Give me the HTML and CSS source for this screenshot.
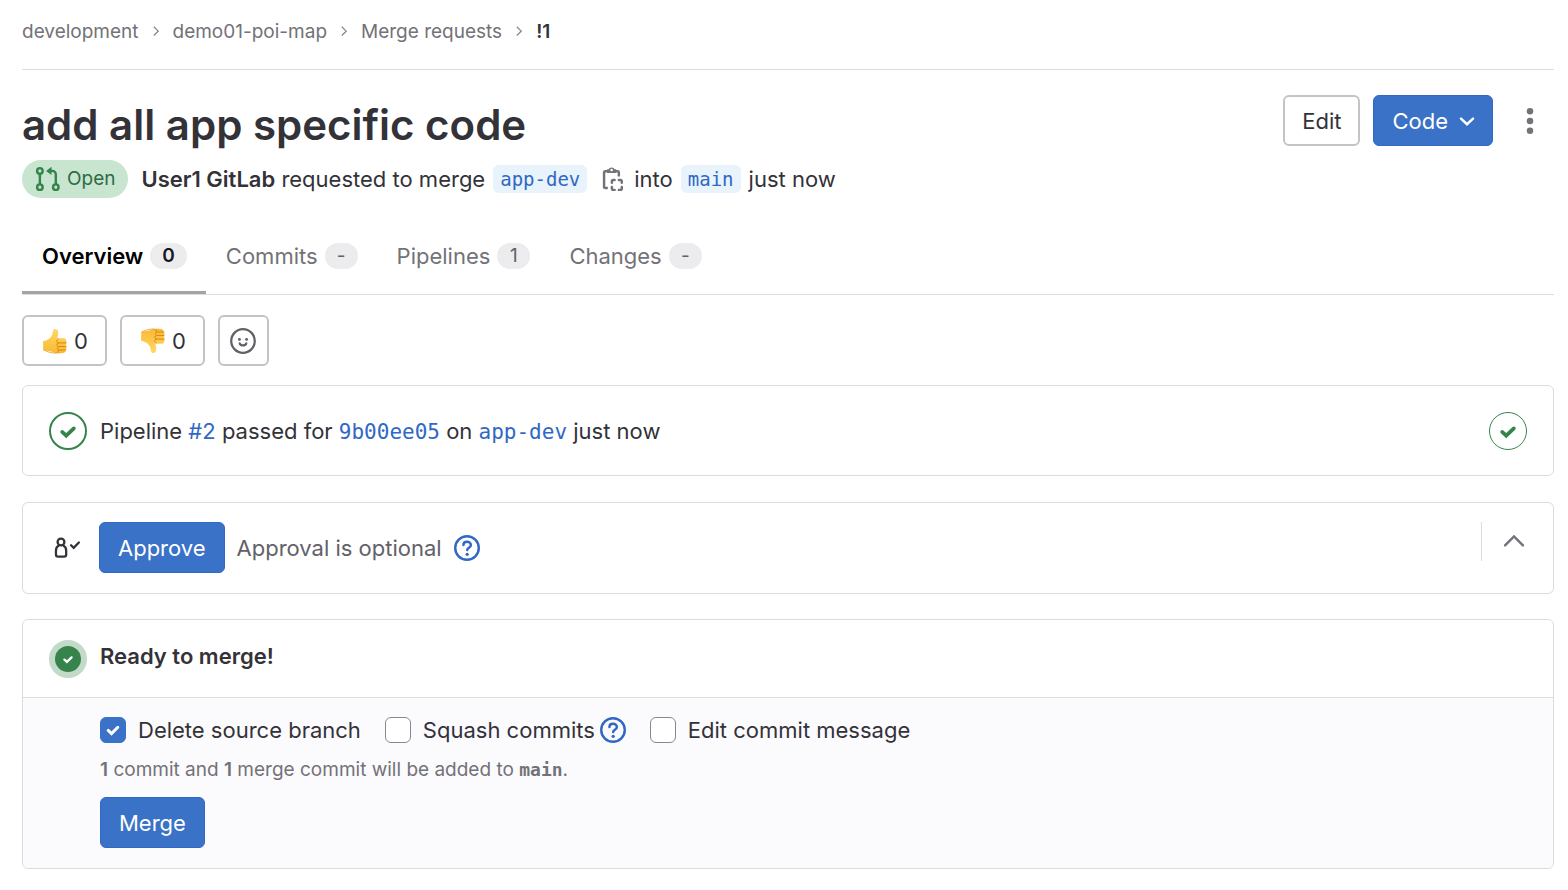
FILE: index.html
```html
<!DOCTYPE html>
<html lang="en">
<head>
<meta charset="utf-8">
<meta name="viewport" content="width=device-width, initial-scale=1">
<title>add all app specific code (!1) · Merge requests</title>
<link rel="stylesheet" href="styles.css">
</head>
<body>
<svg class="defs" aria-hidden="true">
  <defs>
    <linearGradient id="skin" x1="0" y1="0" x2="0" y2="1">
      <stop offset="0" stop-color="#ffd964"/>
      <stop offset="1" stop-color="#f9b934"/>
    </linearGradient>
    <symbol id="crumb" viewBox="0 0 16 16"><path d="M5.500 2l5 5-5 5" fill="none" stroke="currentColor" stroke-width="1.500"/></symbol>
    <symbol id="check" viewBox="0 0 16 16"><path d="M4.400 8.600l2.500 2.300 4.700-4.500" fill="none" stroke="currentColor" stroke-width="2.300" stroke-linecap="round"/></symbol>
    <symbol id="help" viewBox="0 0 16 16">
      <circle cx="8" cy="8" r="7.250" fill="none" stroke="currentColor" stroke-width="1.500"/>
      <path d="M5.800 6.200C5.800 4.900 6.700 4.200 8 4.200s2.400.8 2.400 2c0 1.700-2.300 1.600-2.300 3.100" fill="none" stroke="currentColor" stroke-width="1.500" stroke-linecap="round"/>
      <circle cx="8.100" cy="11.900" r="1" fill="currentColor"/>
    </symbol>
    <symbol id="thumb" viewBox="0 0 26 26">
      <path d="M1 13.200c3.500-.4 7.600-2.600 9.100-6.200.6-1.800.5-4.400 1.700-5.700 1.600-.9 3.600 0 4.200 2 .6 2.600-.3 5-.8 6.900h5.800c2.900 0 3.900 2.200 3.200 4l.2 7.200c-.4 2.300-2.200 3.600-4.600 3.800-5 .5-8.200-.6-11.300-2L1.300 22.300z" fill="url(#skin)"/>
      <path d="M16 11.200c-1.900 1.100-1.700 3.200.3 3.700-1.900.7-1.700 3.200.2 3.700-1.700.8-1.400 3 .3 3.400-1 .6-1.200 1.900-.4 2.800M16.200 14.900h7.900M16.500 18.600h7.400M16.700 22h6.500" fill="none" stroke="#d8860f" stroke-width="1" stroke-linecap="round"/>
      <path d="M1.500 21.900c4.500 2.200 8.500 3.500 13.900 3.100" fill="none" stroke="#e59a1c" stroke-width=".8"/>
    </symbol>
  </defs>
</svg>
<div class="page">
  <nav class="breadcrumbs" aria-label="Breadcrumb">
    <a href="#">development</a>
    <svg class="sep"><use href="#crumb"/></svg>
    <a href="#">demo01-poi-map</a>
    <svg class="sep"><use href="#crumb"/></svg>
    <a href="#">Merge requests</a>
    <svg class="sep"><use href="#crumb"/></svg>
    <a href="#" class="current">!1</a>
  </nav>

  <header class="head">
    <h1>add all app specific code</h1>
    <div class="actions">
      <button class="btn" type="button">Edit</button>
      <button class="btn primary code" type="button">Code
        <svg class="icon" viewBox="0 0 16 16"><path d="M4.300 6.500L8 10l3.700-3.500" fill="none" stroke="currentColor" stroke-width="1.500" stroke-linecap="round"/></svg>
      </button>
      <button class="kebab" type="button" aria-label="Merge request actions">
        <svg class="icon" viewBox="0 0 16 16"><g fill="currentColor"><circle cx="8" cy="2" r="2"/><circle cx="8" cy="8" r="2"/><circle cx="8" cy="14" r="2"/></g></svg>
      </button>
    </div>
  </header>

  <div class="meta">
    <span class="state">
      <svg class="icon" viewBox="0 0 16 16"><g fill="none" stroke="currentColor" stroke-width="1.500"><circle cx="3" cy="3" r="1.700"/><circle cx="3" cy="13" r="1.700"/><circle cx="12.800" cy="13" r="1.700"/><path d="M3 4.700v6.600M8.500 3h2a2.300 2.300 0 0 1 2.300 2.300v6"/></g><path d="M10.200.4v5.200L6.800 3z" fill="currentColor"/></svg>
      Open
    </span>
    <span><strong>User1 GitLab</strong> requested to merge</span>
    <a class="ref" href="#">app-dev</a>
    <button class="copy" type="button" aria-label="Copy branch name">
      <svg class="icon" viewBox="0 0 16 16">
        <g fill="none" stroke="currentColor">
          <path d="M4.500 3.200H3.300c-.5 0-.8.300-.8.800v8.700c0 .5.300.8.800.8h1.500M9.800 3.200h1c.5 0 .8.300.8.800v2.500" stroke-width="1.500"/>
          <path d="M4.800 3.900V2.500h.7a1.800 1.800 0 0 1 3.300 0h.7v1.400z" fill="currentColor" stroke-width=".9"/>
          <path d="M7.300 10.300v-.8c0-.6.300-.9.900-.9H9M11.600 8.600h.9c.6 0 .9.300.9.900v.8M13.400 12.900v.9c0 .6-.3.900-.9.900h-.9M9 14.700h-.8c-.6 0-.9-.3-.9-.9v-.9" stroke-width="1.500" stroke-linecap="round"/>
        </g>
        <circle cx="7.150" cy="2.500" r=".8" fill="#fff"/>
      </svg>
    </button>
    <span>into</span>
    <a class="ref" href="#">main</a>
    <time>just now</time>
  </div>

  <nav class="tabs" aria-label="Merge request">
    <a class="tab active" href="#">Overview <span class="count">0</span></a>
    <a class="tab" href="#">Commits <span class="count">-</span></a>
    <a class="tab" href="#">Pipelines <span class="count">1</span></a>
    <a class="tab" href="#">Changes <span class="count">-</span></a>
  </nav>

  <div class="reactions">
    <button class="btn react" type="button" aria-label="Thumbs up"><svg class="icon"><use href="#thumb"/></svg>0</button>
    <button class="btn react" type="button" aria-label="Thumbs down"><svg class="icon" viewBox="0 0 26 26"><use href="#thumb" width="26" height="26" transform="matrix(1 0 0 -1 0 26)"/></svg>0</button>
    <button class="btn smile" type="button" aria-label="Add reaction">
      <svg class="icon" viewBox="0 0 16 16"><g fill="none" stroke="currentColor" stroke-width="1.400"><circle cx="8" cy="8" r="7.250"/><path d="M6 9.500c.4 1.600 3.600 1.600 4 0" stroke-linecap="round"/></g><g fill="currentColor"><circle cx="5.800" cy="7" r=".9"/><circle cx="10.200" cy="7" r=".9"/></g></svg>
    </button>
  </div>

  <section class="card pipeline">
    <span class="ring thick"><svg class="icon"><use href="#check"/></svg></span>
    <p>Pipeline <a href="#">#2</a> passed for <a class="mono" href="#">9b00ee05</a> on <a class="mono" href="#">app-dev</a> just now</p>
    <a class="ring stage" href="#" aria-label="Stage passed"><svg class="icon"><use href="#check"/></svg></a>
  </section>

  <section class="card approval">
    <svg class="icon approver" viewBox="0 0 16 16"><g fill="none" stroke="currentColor" stroke-width="1.400"><circle cx="4.300" cy="4.300" r="2.100"/><path d="M3.100 6.500C1.800 7 1.200 8.300 1.200 9.700V12c0 .9.400 1.300 1.300 1.300h3.700c.9 0 1.300-.4 1.300-1.300V9.700c0-1.400-.6-2.700-1.900-3.200"/><path d="M10.500 6.300l1.600 1.600 3.200-3.300" stroke-linecap="round"/></g></svg>
    <button class="btn primary" type="button">Approve</button>
    <span class="optional">Approval is optional</span>
    <a class="help" href="#" aria-label="About approvals"><svg class="icon"><use href="#help"/></svg></a>
    <div class="toggle">
      <button type="button" aria-label="Collapse">
        <svg class="icon" viewBox="0 0 16 16"><path d="M2.500 10.700L8 5.200l5.500 5.500" fill="none" stroke="currentColor" stroke-width="1.500" stroke-linecap="round"/></svg>
      </button>
    </div>
  </section>

  <section class="card merge">
    <div class="ready">
      <span class="status"><svg viewBox="0 0 16 16"><use href="#check"/></svg></span>
      <h2>Ready to merge!</h2>
    </div>
    <form class="options">
      <div class="checks">
        <div class="check"><input type="checkbox" id="del" checked><label for="del">Delete source branch</label></div>
        <div class="check squash"><input type="checkbox" id="squash"><label for="squash">Squash commits</label><a class="help" href="#" aria-label="About squashing"><svg class="icon"><use href="#help"/></svg></a></div>
        <div class="check"><input type="checkbox" id="msg"><label for="msg">Edit commit message</label></div>
      </div>
      <p class="summary"><strong>1</strong> commit and <strong>1</strong> merge commit will be added to <strong class="target">main</strong>.</p>
      <button class="btn primary" type="button">Merge</button>
    </form>
  </section>
</div>
</body>
</html>
```

FILE: styles.css
```css
* { box-sizing: border-box; }

body {
  margin: 0;
  background: #fff;
  color: #333238;
  font: 22px/32px Inter, "Liberation Sans", sans-serif;
}

h1, h2, p { margin: 0; }
a { color: #2f68c5; text-decoration: none; }
button { font: inherit; cursor: pointer; }
svg { display: block; flex: none; }
strong { font-weight: 600; }

.defs { position: absolute; width: 0; height: 0; }
.icon { width: 26px; height: 26px; }
.page { padding: 0 14px 21px 22px; }

.breadcrumbs {
  display: flex;
  align-items: center;
  gap: 10px;
  height: 70px;
  padding-bottom: 6px;
  border-bottom: 1px solid #dcdcde;
  font-size: 19px;
}
.breadcrumbs a { color: #737278; }
.breadcrumbs .current { color: #333238; font-weight: 600; }
.sep { width: 14px; height: 14px; color: #89888d; }

.head {
  display: flex;
  justify-content: space-between;
  align-items: flex-start;
  padding-top: 25px;
}
h1 { padding-top: 3px; font-size: 42px; line-height: 54px; font-weight: 600; }
.actions { display: flex; gap: 13px; }

.btn {
  display: inline-flex;
  align-items: center;
  justify-content: center;
  height: 51px;
  padding: 0 17px;
  border: 2px solid #c4c4c8;
  border-radius: 6px;
  background: #fff;
  color: #333238;
}
.btn.primary { border: 1px solid #2f68c5; background: #3972c6; color: #fff; padding: 0 18px; }
.btn.code { gap: 6px; padding-right: 12px; }
.kebab {
  display: grid;
  place-items: center;
  width: 48px;
  height: 51px;
  padding: 0;
  border: 0;
  background: none;
  color: #737278;
}

.meta { display: flex; flex-wrap: wrap; align-items: center; gap: 8px; padding-top: 8px; }
.state {
  display: flex;
  align-items: center;
  gap: 6px;
  height: 38px;
  margin-right: 5px;
  padding: 0 13px;
  border-radius: 19px;
  background: #c8e5cf;
  color: #2f6b43;
  font-size: 19px;
}
.state .icon { color: #36844c; }
.ref {
  padding: 0 7px;
  border-radius: 6px;
  background: #e9f3fc;
  font: 19px/28px "DejaVu Sans Mono", monospace;
}
.copy { margin-left: 5px; padding: 0; border: 0; background: none; color: #737278; }

.tabs { display: flex; margin-top: 20px; border-bottom: 1px solid #dcdcde; }
.tab {
  display: flex;
  align-items: center;
  gap: 7px;
  height: 76px;
  padding: 0 19px 0 20px;
  color: #737278;
}
.tab.active { color: #000; font-weight: 600; box-shadow: inset 0 -3px #a4a3a8; }
.count {
  min-width: 33px;
  padding: 0 12px;
  border-radius: 13px;
  background: #ececef;
  color: #626168;
  font-size: 19px;
  line-height: 26px;
  text-align: center;
}
.active .count { color: #18171d; }

.reactions { display: flex; gap: 13px; padding: 20px 0 19px; }
.react { gap: 6px; padding: 0 17px 0 18px; }
.smile { width: 51px; padding: 0; color: #626168; }

.card { border: 1px solid #dcdcde; border-radius: 6px; }
.pipeline { display: flex; align-items: center; gap: 13px; padding: 26px 26px 25px; }
.ring {
  display: grid;
  place-items: center;
  width: 38px;
  height: 38px;
  border: 1px solid #36844c;
  border-radius: 50%;
  color: #36844c;
}
.ring.thick { border-width: 2px; }
.stage { margin-left: auto; }
.mono { font-family: "DejaVu Sans Mono", monospace; font-size: 21px; }

.approval { display: flex; align-items: center; margin-top: 26px; padding: 19px 26px 20px 31px; }
.approver { margin-right: 19px; }
.optional { margin: 0 12px; color: #626168; }
.toggle {
  align-self: flex-start;
  margin-left: auto;
  padding: 6px 0 7px 19px;
  border-left: 1px solid #dcdcde;
}
.toggle button { display: block; padding: 0; border: 0; background: none; color: #737278; }

.merge { margin-top: 25px; overflow: hidden; }
.ready { display: flex; gap: 13px; padding: 20px 26px 19px; }
.status {
  display: grid;
  place-items: center;
  width: 38px;
  height: 38px;
  border: 6px solid #c3dac9;
  border-radius: 50%;
  background: #36844c;
  color: #fff;
}
.status svg { width: 16px; height: 16px; }
h2 { font-size: 22px; line-height: 32px; font-weight: 600; }

.options { padding: 16px 77px 20px; border-top: 1px solid #dcdcde; background: #fbfafd; }
.checks { display: flex; flex-wrap: wrap; gap: 24px; }
.check { display: flex; align-items: center; gap: 12px; }
.check input {
  appearance: none;
  width: 26px;
  height: 26px;
  margin: 0;
  border: 1px solid #89888d;
  border-radius: 6px;
  background: #fff;
}
.check input:checked {
  border-color: #3972c6;
  background: #3972c6 url("data:image/svg+xml,%3Csvg xmlns='http://www.w3.org/2000/svg' viewBox='0 0 16 16'%3E%3Cpath d='M4.800 8.300l2.200 2.100 4.200-4.200' fill='none' stroke='white' stroke-width='2' stroke-linecap='round'/%3E%3C/svg%3E") center / 24px;
}
.squash .help { margin-left: -7px; }
.summary { padding: 8px 0 11px; color: #737278; font-size: 19px; }
.target { font: bold 18px "DejaVu Sans Mono", monospace; }
```
